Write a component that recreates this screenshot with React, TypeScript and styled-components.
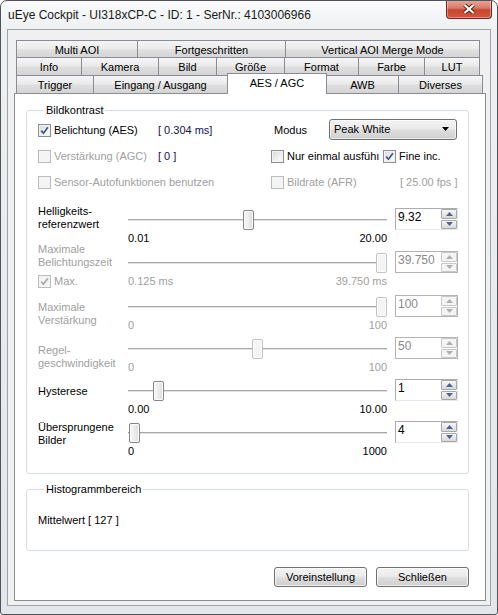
import React from "react";
import styled, { createGlobalStyle } from "styled-components";

const GlobalStyle = createGlobalStyle`
  body {
    margin: 0;
    background: #ffffff;
  }
`;

const Window = styled.div`
  width: 498px;
  height: 615px;
  box-sizing: border-box;
  border: 1px solid #50545a;
  border-radius: 7px 7px 3px 3px;
  background: linear-gradient(180deg, #fbfbfc 0px, #eef0f2 28px, #e3e6ea 100%);
  display: flex;
  flex-direction: column;
  font-family: "Liberation Sans", Arial, sans-serif;
  font-size: 11px;
  color: #000;
  overflow: hidden;
`;

const TitleBar = styled.div`
  height: 28px;
  display: flex;
  align-items: flex-start;
  padding-left: 7px;
`;

const Title = styled.div`
  font-size: 12px;
  line-height: 28px;
  color: #1a1a1a;
`;

const CloseButton = styled.div`
  margin-left: auto;
  margin-right: 5px;
  margin-top: -1px;
  width: 46px;
  height: 19px;
  box-sizing: border-box;
  border: 1px solid #6b2a22;
  border-top: none;
  border-radius: 0 0 4px 4px;
  background: linear-gradient(180deg, #e9a99b 0%, #d77a68 45%, #c9452f 55%, #cf5a3f 100%);
  box-shadow: inset 0 0 0 1px rgba(255, 255, 255, 0.35);
  display: flex;
  align-items: center;
  justify-content: center;
`;

const Client = styled.div`
  margin: 0 6px 8px 6px;
  height: 577px;
  box-sizing: border-box;
  border: 1px solid #a0a4a8;
  background: #f0f0f0;
  padding: 10px 4px 0 6px;
`;

const TabStrip = styled.div`
  margin-left: 2px;
`;

const TabRow = styled.div<{ $h: number }>`
  display: flex;
  height: ${(p) => p.$h}px;
`;

const Tab = styled.div<{ $w: number; $active?: boolean }>`
  width: ${(p) => p.$w}px;
  flex: none;
  box-sizing: border-box;
  margin-right: -1px;
  border: 1px solid #898c95;
  border-bottom: none;
  display: flex;
  align-items: center;
  justify-content: center;
  white-space: nowrap;
  font-size: 11px;
  height: ${(p) => (p.$active ? 21 : 18)}px;
  margin-top: ${(p) => (p.$active ? -2 : 0)}px;
  padding-bottom: ${(p) => (p.$active ? 2 : 0)}px;
  position: ${(p) => (p.$active ? "relative" : "static")};
  z-index: ${(p) => (p.$active ? 2 : "auto")};
  background: ${(p) =>
    p.$active
      ? "#ffffff"
      : "linear-gradient(180deg, #f5f5f5 0%, #ebebeb 45%, #dedede 55%, #d4d4d4 100%)"};
`;

const Panel = styled.div`
  width: 472px;
  height: 508px;
  box-sizing: border-box;
  border: 1px solid #898c95;
  background: #ffffff;
  padding: 0 16px 0 11px;
  display: flex;
  flex-direction: column;
`;

const Group = styled.fieldset<{ $h: number; $top: number }>`
  margin: ${(p) => p.$top}px 0 0 0;
  padding: 0 11px;
  height: ${(p) => p.$h}px;
  box-sizing: border-box;
  border: 1px solid #d5dfe5;
  border-radius: 3px;
  min-width: 0;
`;

const Legend = styled.legend`
  margin-left: 6px;
  padding: 0 2px;
  font-size: 11px;
  line-height: 13px;
`;

const OptionRow = styled.div`
  display: flex;
  align-items: center;
  height: 26px;
`;

const Cell = styled.div<{ $w?: number }>`
  display: flex;
  align-items: center;
  flex: none;
  width: ${(p) => (p.$w ? `${p.$w}px` : "auto")};
  white-space: nowrap;
`;

const Box = styled.span<{ $disabled?: boolean }>`
  width: 13px;
  height: 13px;
  flex: none;
  box-sizing: border-box;
  border: 1px solid ${(p) => (p.$disabled ? "#bcbcbc" : "#8e8f8f")};
  background: ${(p) =>
    p.$disabled ? "#f4f4f4" : "linear-gradient(135deg, #d4d7dc 0%, #eef0f2 55%, #fbfbfb 100%)"};
  box-shadow: inset 0 0 0 1px ${(p) => (p.$disabled ? "#f4f4f4" : "#f2f2f2")};
  display: flex;
  align-items: center;
  justify-content: center;
`;

const CheckText = styled.span<{ $disabled?: boolean }>`
  margin-left: 3px;
  color: ${(p) => (p.$disabled ? "#a0a0a0" : "#000")};
  line-height: 13px;
`;

const Value = styled.span<{ $tone: "navy" | "gray" | "black" }>`
  color: ${(p) => (p.$tone === "navy" ? "#10105a" : p.$tone === "gray" ? "#a0a0a0" : "#000")};
  line-height: 13px;
`;

const Select = styled.div`
  width: 129px;
  height: 21px;
  box-sizing: border-box;
  border: 1px solid #707070;
  border-radius: 3px;
  background: linear-gradient(180deg, #f3f3f3 0%, #ebebeb 45%, #dddddd 55%, #cfcfcf 100%);
  box-shadow: inset 0 0 0 1px rgba(255, 255, 255, 0.6);
  display: flex;
  align-items: center;
  justify-content: space-between;
  padding: 0 7px 1px 4px;
  margin-top: -1px;
`;

const SliderRow = styled.div<{ $top: number }>`
  display: grid;
  grid-template-columns: 90px 259px 71px;
  grid-template-rows: 20px 15px;
  margin-top: ${(p) => p.$top}px;
`;

const SliderLabel = styled.div<{ $offset: number; $disabled?: boolean }>`
  grid-column: 1;
  grid-row: 1;
  align-self: start;
  margin-top: ${(p) => p.$offset}px;
  line-height: 13px;
  color: ${(p) => (p.$disabled ? "#a0a0a0" : "#000")};
`;

const LabelExtra = styled.div`
  grid-column: 1;
  grid-row: 2;
  display: flex;
  align-items: center;
  padding-top: 2px;
`;

const Track = styled.div`
  grid-column: 2;
  grid-row: 1;
  position: relative;
`;

const TrackLine = styled.div`
  position: absolute;
  left: 0;
  right: 0;
  top: 9px;
  height: 2px;
  box-sizing: border-box;
  border-top: 1px solid #a9a9a9;
  border-bottom: 1px solid #e2e2e2;
`;

const Thumb = styled.div<{ $disabled?: boolean }>`
  position: absolute;
  top: 0;
  width: 11px;
  height: 20px;
  box-sizing: border-box;
  border: 1px solid ${(p) => (p.$disabled ? "#c3c3c3" : "#858585")};
  border-radius: 2px;
  background: ${(p) =>
    p.$disabled ? "#f4f4f4" : "linear-gradient(90deg, #f8f8f8 0%, #ececec 50%, #dcdcdc 100%)"};
  box-shadow: inset 0 0 0 1px ${(p) => (p.$disabled ? "#fbfbfb" : "#fdfdfd")};
`;

const Scale = styled.div<{ $disabled?: boolean }>`
  grid-column: 2;
  grid-row: 2;
  display: flex;
  justify-content: space-between;
  padding-top: 2px;
  line-height: 13px;
  color: ${(p) => (p.$disabled ? "#a0a0a0" : "#000")};
`;

const Spin = styled.div<{ $disabled?: boolean }>`
  grid-column: 3;
  grid-row: 1 / span 2;
  justify-self: end;
  align-self: start;
  margin-top: -2px;
  width: 63px;
  height: 22px;
  box-sizing: border-box;
  border: 1px solid ${(p) => (p.$disabled ? "#b4b4b4" : "#abadb3")};
  border-right-color: ${(p) => (p.$disabled ? "#b4b4b4" : "#e3e9ef")};
  border-bottom-color: ${(p) => (p.$disabled ? "#b4b4b4" : "#e3e9ef")};
  background: #ffffff;
  display: flex;
`;

const SpinText = styled.div<{ $disabled?: boolean }>`
  flex: 1;
  padding: 2px 0 0 2px;
  line-height: 13px;
  font-size: 12px;
  color: ${(p) => (p.$disabled ? "#8a8a8a" : "#000")};
`;

const SpinButtons = styled.div`
  width: 16px;
  display: flex;
  flex-direction: column;
  gap: 1px;
`;

const SpinButton = styled.div<{ $disabled?: boolean }>`
  flex: 1;
  box-sizing: border-box;
  border: 1px solid ${(p) => (p.$disabled ? "#c8c8c8" : "#a7a7a7")};
  border-radius: 1px;
  background: ${(p) =>
    p.$disabled ? "#f4f4f4" : "linear-gradient(180deg, #f6f6f6 0%, #e6e6e6 55%, #d9d9d9 100%)"};
  display: flex;
  align-items: center;
  justify-content: center;
`;

const ButtonRow = styled.div`
  display: flex;
  justify-content: flex-end;
  gap: 9px;
  margin-top: 16px;
`;

const Button = styled.div`
  width: 93px;
  height: 20px;
  box-sizing: border-box;
  border: 1px solid #707070;
  border-radius: 3px;
  background: linear-gradient(180deg, #f3f3f3 0%, #ebebeb 45%, #dddddd 55%, #cfcfcf 100%);
  box-shadow: inset 0 0 0 1px rgba(255, 255, 255, 0.7);
  display: flex;
  align-items: center;
  justify-content: center;
  font-size: 11px;
`;

const Mean = styled.div`
  padding-top: 18px;
  line-height: 13px;
`;

const CheckBox = ({ checked, disabled }: { checked?: boolean; disabled?: boolean }) => (
  <Box $disabled={disabled}>
    {checked && (
      <svg width="9" height="9" viewBox="0 0 9 9">
        <path
          d="M1.2 4.6 L3.5 7.2 L7.9 1.2"
          fill="none"
          stroke={disabled ? "#a9a9a9" : "#41558a"}
          strokeWidth="1.7"
        />
      </svg>
    )}
  </Box>
);

const Arrow = ({ up, disabled }: { up?: boolean; disabled?: boolean }) => (
  <svg width="7" height="4" viewBox="0 0 7 4">
    <path d={up ? "M0 4 L3.5 0 L7 4 Z" : "M0 0 L3.5 4 L7 0 Z"} fill={disabled ? "#b0b0b0" : "#4e6490"} />
  </svg>
);

const tabRows = [
  { h: 17, tabs: [["Multi AOI", 122], ["Fortgeschritten", 149], ["Vertical AOI Merge Mode", 195]] },
  {
    h: 18,
    tabs: [["Info", 66], ["Kamera", 78], ["Bild", 59], ["Größe", 69], ["Format", 75], ["Farbe", 67], ["LUT", 56]],
  },
  { h: 18, tabs: [["Trigger", 78], ["Eingang / Ausgang", 135], ["AES / AGC", 100], ["AWB", 73], ["Diverses", 85]] },
];

type SliderDef = {
  lines: string[];
  offset: number;
  top: number;
  frac: number;
  min: string;
  max: string;
  spin: string;
  disabled?: boolean;
  max_check?: boolean;
};

const sliders: SliderDef[] = [
  { lines: ["Helligkeits-", "referenzwert"], offset: -5, top: 15, frac: 0.464, min: "0.01", max: "20.00", spin: "9.32" },
  {
    lines: ["Maximale", "Belichtungszeit"],
    offset: -10,
    top: 8,
    frac: 1,
    min: "0.125 ms",
    max: "39.750 ms",
    spin: "39.750",
    disabled: true,
    max_check: true,
  },
  { lines: ["Maximale", "Verstärkung"], offset: 4, top: 9, frac: 1, min: "0", max: "100", spin: "100", disabled: true },
  { lines: ["Regel-", "geschwindigkeit"], offset: 5, top: 7, frac: 0.5, min: "0", max: "100", spin: "50", disabled: true },
  { lines: ["Hysterese"], offset: 4, top: 7, frac: 0.1, min: "0.00", max: "10.00", spin: "1" },
  { lines: ["Übersprungene", "Bilder"], offset: -2, top: 7, frac: 0.004, min: "0", max: "1000", spin: "4" },
];

const App = () => {
  return (
    <Window>
      <GlobalStyle />
      <TitleBar>
        <Title>uEye Cockpit - UI318xCP-C - ID: 1 - SerNr.: 4103006966</Title>
        <CloseButton>
          <svg width="12" height="10" viewBox="0 0 12 10">
            <path d="M1.5 1 L10.5 9 M10.5 1 L1.5 9" stroke="#5b1d14" strokeWidth="4" />
            <path d="M1.5 1 L10.5 9 M10.5 1 L1.5 9" stroke="#ffffff" strokeWidth="2.2" />
          </svg>
        </CloseButton>
      </TitleBar>
      <Client>
        <TabStrip>
          {tabRows.map((row, i) => (
            <TabRow key={i} $h={row.h}>
              {row.tabs.map(([name, w]) => (
                <Tab key={name as string} $w={w as number} $active={name === "AES / AGC"}>
                  {name}
                </Tab>
              ))}
            </TabRow>
          ))}
        </TabStrip>
        <Panel>
          <Group $h={370} $top={10}>
            <Legend>Bildkontrast</Legend>
            <OptionRow>
              <Cell $w={120}>
                <CheckBox checked />
                <CheckText>Belichtung (AES)</CheckText>
              </Cell>
              <Cell $w={113}>
                <Value $tone="navy">[ 0.304 ms]</Value>
              </Cell>
              <Cell $w={58}>
                <Value $tone="black">&nbsp;Modus</Value>
              </Cell>
              <Select>
                <span>Peak White</span>
                <svg width="7" height="4" viewBox="0 0 7 4">
                  <path d="M0 0 L7 0 L3.5 4 Z" fill="#000" />
                </svg>
              </Select>
            </OptionRow>
            <OptionRow>
              <Cell $w={120}>
                <CheckBox disabled />
                <CheckText $disabled>Verstärkung (AGC)</CheckText>
              </Cell>
              <Cell $w={113}>
                <Value $tone="navy">[ 0 ]</Value>
              </Cell>
              <Cell $w={112}>
                <CheckBox />
                <CheckText>Nur einmal ausfühı</CheckText>
              </Cell>
              <Cell>
                <CheckBox checked />
                <CheckText>Fine inc.</CheckText>
              </Cell>
            </OptionRow>
            <OptionRow>
              <Cell $w={233}>
                <CheckBox disabled />
                <CheckText $disabled>Sensor-Autofunktionen benutzen</CheckText>
              </Cell>
              <Cell $w={129}>
                <CheckBox disabled />
                <CheckText $disabled>Bildrate (AFR)</CheckText>
              </Cell>
              <Cell>
                <Value $tone="gray">[ 25.00 fps ]</Value>
              </Cell>
            </OptionRow>
            {sliders.map((s) => (
              <SliderRow key={s.lines.join("")} $top={s.top}>
                <SliderLabel $offset={s.offset} $disabled={s.disabled}>
                  {s.lines.map((l) => (
                    <div key={l}>{l}</div>
                  ))}
                </SliderLabel>
                {s.max_check && (
                  <LabelExtra>
                    <CheckBox checked disabled />
                    <CheckText $disabled>Max.</CheckText>
                  </LabelExtra>
                )}
                <Track>
                  <TrackLine />
                  <Thumb $disabled={s.disabled} style={{ left: Math.round(s.frac * 248) }} />
                </Track>
                <Scale $disabled={s.disabled}>
                  <span>{s.min}</span>
                  <span>{s.max}</span>
                </Scale>
                <Spin $disabled={s.disabled}>
                  <SpinText $disabled={s.disabled}>{s.spin}</SpinText>
                  <SpinButtons>
                    <SpinButton $disabled={s.disabled}>
                      <Arrow up disabled={s.disabled} />
                    </SpinButton>
                    <SpinButton $disabled={s.disabled}>
                      <Arrow disabled={s.disabled} />
                    </SpinButton>
                  </SpinButtons>
                </Spin>
              </SliderRow>
            ))}
          </Group>
          <Group $h={68} $top={9}>
            <Legend>Histogrammbereich</Legend>
            <Mean>Mittelwert [ 127 ]</Mean>
          </Group>
          <ButtonRow>
            <Button>Voreinstellung</Button>
            <Button>Schließen</Button>
          </ButtonRow>
        </Panel>
      </Client>
    </Window>
  );
};

export default App;
